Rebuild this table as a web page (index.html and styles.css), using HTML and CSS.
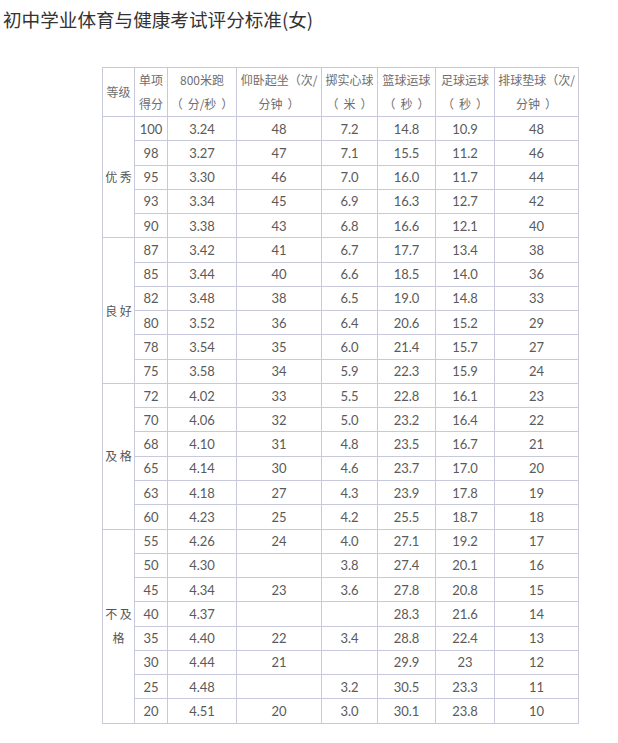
FILE: index.html
```html
<!DOCTYPE html>
<html lang="zh">
<head>
<meta charset="utf-8">
<link rel="stylesheet" href="styles.css">
</head>
<body>
<h1 class="title">初中学业体育与健康考试评分标准(女)</h1>
<table class="score">
<colgroup>
<col class="c1"><col class="c2"><col class="c3"><col class="c4"><col class="c5"><col class="c6"><col class="c7"><col class="c8">
</colgroup>
<thead>
<tr class="head">
<th class="cjk">等级</th>
<th class="cjk">单项<br>得分</th>
<th class="cjk">800米跑<br><span class="op">（</span>分/秒<span class="cp">）</span></th>
<th class="cjk">仰卧起坐<span class="mid">（</span>次/<br>分钟<span class="cp">）</span></th>
<th class="cjk">掷实心球<br><span class="op">（</span>米<span class="cp">）</span></th>
<th class="cjk">篮球运球<br><span class="op">（</span>秒<span class="cp">）</span></th>
<th class="cjk">足球运球<br><span class="op">（</span>秒<span class="cp">）</span></th>
<th class="cjk">排球垫球<span class="mid">（</span>次/<br>分钟<span class="cp">）</span></th>
</tr>
</thead>
<tbody>
<tr><td class="grade" rowspan="5">优 秀</td><td>100</td><td>3.24</td><td>48</td><td>7.2</td><td>14.8</td><td>10.9</td><td>48</td></tr>
<tr><td>98</td><td>3.27</td><td>47</td><td>7.1</td><td>15.5</td><td>11.2</td><td>46</td></tr>
<tr><td>95</td><td>3.30</td><td>46</td><td>7.0</td><td>16.0</td><td>11.7</td><td>44</td></tr>
<tr><td>93</td><td>3.34</td><td>45</td><td>6.9</td><td>16.3</td><td>12.7</td><td>42</td></tr>
<tr><td>90</td><td>3.38</td><td>43</td><td>6.8</td><td>16.6</td><td>12.1</td><td>40</td></tr>
<tr><td class="grade" rowspan="6">良 好</td><td>87</td><td>3.42</td><td>41</td><td>6.7</td><td>17.7</td><td>13.4</td><td>38</td></tr>
<tr><td>85</td><td>3.44</td><td>40</td><td>6.6</td><td>18.5</td><td>14.0</td><td>36</td></tr>
<tr><td>82</td><td>3.48</td><td>38</td><td>6.5</td><td>19.0</td><td>14.8</td><td>33</td></tr>
<tr><td>80</td><td>3.52</td><td>36</td><td>6.4</td><td>20.6</td><td>15.2</td><td>29</td></tr>
<tr><td>78</td><td>3.54</td><td>35</td><td>6.0</td><td>21.4</td><td>15.7</td><td>27</td></tr>
<tr><td>75</td><td>3.58</td><td>34</td><td>5.9</td><td>22.3</td><td>15.9</td><td>24</td></tr>
<tr><td class="grade" rowspan="6">及 格</td><td>72</td><td>4.02</td><td>33</td><td>5.5</td><td>22.8</td><td>16.1</td><td>23</td></tr>
<tr><td>70</td><td>4.06</td><td>32</td><td>5.0</td><td>23.2</td><td>16.4</td><td>22</td></tr>
<tr><td>68</td><td>4.10</td><td>31</td><td>4.8</td><td>23.5</td><td>16.7</td><td>21</td></tr>
<tr><td>65</td><td>4.14</td><td>30</td><td>4.6</td><td>23.7</td><td>17.0</td><td>20</td></tr>
<tr><td>63</td><td>4.18</td><td>27</td><td>4.3</td><td>23.9</td><td>17.8</td><td>19</td></tr>
<tr><td>60</td><td>4.23</td><td>25</td><td>4.2</td><td>25.5</td><td>18.7</td><td>18</td></tr>
<tr><td class="grade" rowspan="8">不 及<br>格</td><td>55</td><td>4.26</td><td>24</td><td>4.0</td><td>27.1</td><td>19.2</td><td>17</td></tr>
<tr><td>50</td><td>4.30</td><td></td><td>3.8</td><td>27.4</td><td>20.1</td><td>16</td></tr>
<tr><td>45</td><td>4.34</td><td>23</td><td>3.6</td><td>27.8</td><td>20.8</td><td>15</td></tr>
<tr><td>40</td><td>4.37</td><td></td><td></td><td>28.3</td><td>21.6</td><td>14</td></tr>
<tr><td>35</td><td>4.40</td><td>22</td><td>3.4</td><td>28.8</td><td>22.4</td><td>13</td></tr>
<tr><td>30</td><td>4.44</td><td>21</td><td></td><td>29.9</td><td>23</td><td>12</td></tr>
<tr><td>25</td><td>4.48</td><td></td><td>3.2</td><td>30.5</td><td>23.3</td><td>11</td></tr>
<tr><td>20</td><td>4.51</td><td>20</td><td>3.0</td><td>30.1</td><td>23.8</td><td>10</td></tr>
</tbody>
</table>
</body>
</html>
```

FILE: styles.css
```css
html, body {
  margin: 0;
  padding: 0;
  background: #ffffff;
}

body {
  font-family: "Noto Sans CJK SC", "Noto Sans", sans-serif;
  color: #333333;
}

.title {
  margin: 6px 0 35px 0;
  padding-left: 3px;
  font-size: 18.6px;
  line-height: 26px;
  font-weight: normal;
  color: #333333;
}

.score {
  margin-left: 102px;
  border-collapse: collapse;
  table-layout: fixed;
  width: 476px;
  font-family: "Lato", "Liberation Sans", "Noto Sans CJK SC", sans-serif;
  font-size: 13px;
  color: #5a5a5a;
}

.c1 { width: 32px; }
.c2 { width: 33px; }
.c3 { width: 69px; }
.c4 { width: 85px; }
.c5 { width: 56px; }
.c6 { width: 58px; }
.c7 { width: 59px; }
.c8 { width: 84px; }

.score th,
.score td {
  border: 1px solid #c9c9dd;
  padding: 0;
  text-align: center;
  vertical-align: middle;
  white-space: nowrap;
  overflow: hidden;
}

.score td {
  height: 23.28px;
  line-height: 18px;
}

.score .head th {
  height: 46px;
  font-weight: normal;
  font-size: 12px;
  line-height: 24px;
  color: #6e6e6e;
}

.op {
  margin-right: 5px;
}

.cp {
  margin-left: 5px;
}

.cjk {
  font-family: "Noto Sans CJK SC", sans-serif;
}

.score td.grade {
  font-family: "Noto Sans CJK SC", sans-serif;
  font-size: 12px;
  line-height: 24px;
  color: #555555;
}
```
